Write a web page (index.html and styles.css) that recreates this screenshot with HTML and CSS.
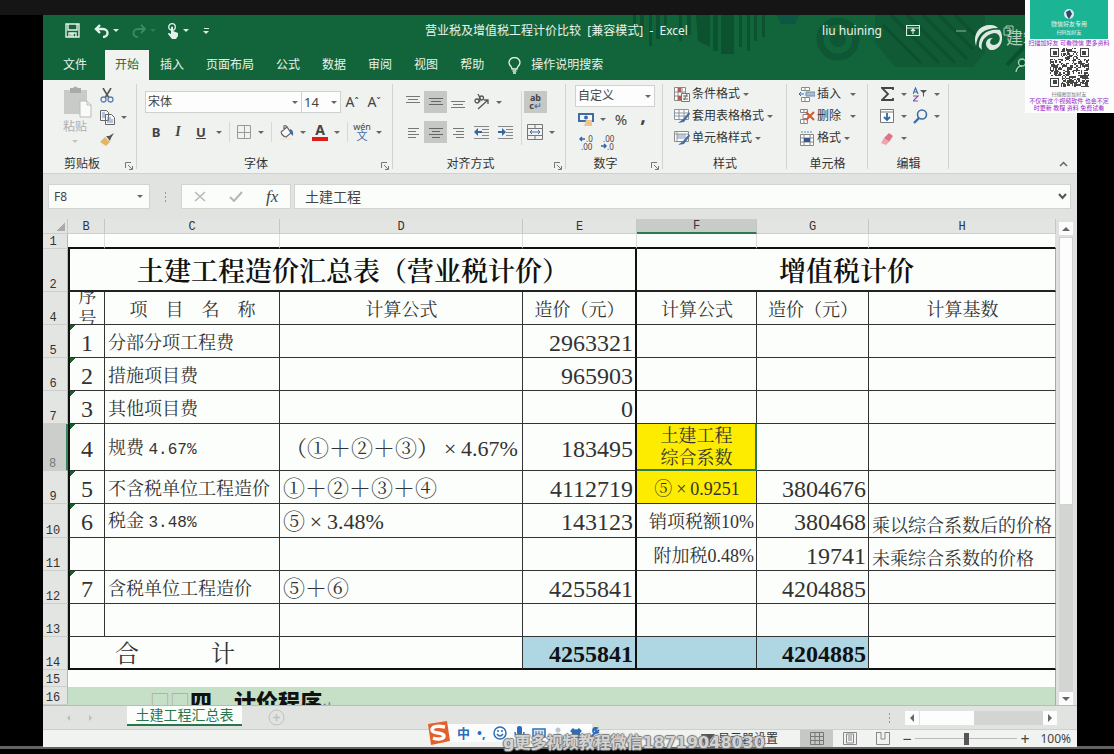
FILE: index.html
```html
<!DOCTYPE html>
<html lang="zh-CN">
<head>
<meta charset="utf-8">
<title>营业税及增值税工程计价比较 - Excel</title>
<link rel="stylesheet" href="styles.css">
</head>
<body>
<main class="window">
  <header class="top">
    <svg class="decor" viewBox="0 0 460 65" width="460" height="65" aria-hidden="true">
      <g fill="#0c5230"><path d="M16 0h3v12h-3zM23 0h4v18h-4zM32 0h3v31h-3zM39 0h4v24h-4zM47 0h3v10h-3zM62 0h3v26h-3zM70 0h4v20h-4zM79 0h14v32l-12-6zM96 0h5v36h-5zM104 0h13v39h-13zM122 0h3v32h-3zM130 0h3v36h-3zM137 0h3v26h-3zM145 0h3v22h-3z"/></g>
      <path d="M160 0h22l-4 9h-14z" fill="#0d5743"/>
      <circle cx="221" cy="24" r="18" fill="none" stroke="#0f5635" stroke-width="7"/><circle cx="221" cy="24" r="8" fill="#0f5635"/>
      <path d="M258 0h110v38l-12 14H278l-20-24z" fill="#115a36"/>
      <path d="M266 10l38 38M274 0l48 48M290 0l48 48M306 0l44 44M322 0l34 34M338 0l24 24" stroke="#0d5030" stroke-width="3"/>
      <path d="M390 50l30-32M400 54l35-37" stroke="#0d5030" stroke-width="4"/>
    </svg>
    <div class="titlebar">
      <div class="quick">
        <button class="q save" aria-label="保存"><svg width="15" height="15" viewBox="0 0 15 15"><path d="M1 1h13v13H1zM3 1v6h9V1M4 14v-4h7v4M6 14v-3h2v3" fill="none" stroke="#e4f1e8" stroke-width="1.4"/></svg></button>
        <button class="q" aria-label="撤消"><svg width="16" height="14" viewBox="0 0 16 14"><path d="M6 1L2 5l4 4M2 5h7c6 0 6 8 0 8" fill="none" stroke="#e4f1e8" stroke-width="2.4"/></svg></button><i class="caret pale"></i>
        <button class="q redo" aria-label="重做"><svg width="16" height="14" viewBox="0 0 16 14"><path d="M10 1l4 4-4 4M14 5H7c-6 0-6 8 0 8" fill="none" stroke="#3b8a60" stroke-width="1.8"/></svg></button><i class="caret faint"></i>
        <button class="q touch" aria-label="触摸/鼠标模式"><svg width="13" height="16" viewBox="0 0 13 16"><circle cx="5" cy="4" r="3.3" fill="none" stroke="#e4f1e8" stroke-width="1.3"/><path d="M4 4q1-1 2 0v4l5 2v3L9 16H5L1 11q0-2 3 0z" fill="#e4f1e8"/></svg></button><i class="caret pale"></i>
        <button class="q more" aria-label="自定义快速访问工具栏"><i class="bar"></i><i class="caret pale"></i></button>
      </div>
      <h1 class="doc">营业税及增值税工程计价比较&nbsp; [兼容模式]&nbsp; -&nbsp; Excel</h1>
      <div class="account">
        <span class="user">liu huining</span>
        <button class="q" aria-label="功能区显示选项"><svg width="14" height="11" viewBox="0 0 14 11"><path d="M.5.500h13v10H.5zM.5 3h13M7 9V4M5 6l2-2 2 2" fill="none" stroke="#dcebe2" stroke-width="1.2"/></svg></button>
        <button class="q min" aria-label="最小化"><svg width="10" height="2"><path d="M0 1h10" stroke="#8db8a0"/></svg></button>
      </div>
    </div>
    <nav class="tabs">
      <a href="#" class="tab">文件</a><a href="#" class="tab on">开始</a><a href="#" class="tab">插入</a><a href="#" class="tab">页面布局</a><a href="#" class="tab">公式</a><a href="#" class="tab">数据</a><a href="#" class="tab">审阅</a><a href="#" class="tab">视图</a><a href="#" class="tab">帮助</a>
      <a href="#" class="tab tell"><svg width="13" height="17" viewBox="0 0 13 17"><path d="M4 12C4 9 1 9 1 5.500a5.500 5 0 0 1 11 0C12 9 9 9 9 12zM4.500 14h4M5 16h3" fill="none" stroke="#e4f1e8" stroke-width="1.300"/></svg>操作说明搜索</a>
      <svg class="share" width="12" height="15" viewBox="0 0 12 15"><circle cx="7" cy="4.500" r="3.500" fill="none" stroke="#a9cdb8" stroke-width="1.300"/><path d="M1 14q1-6 6-6" fill="none" stroke="#a9cdb8" stroke-width="1.300"/></svg>
    </nav>
    <div class="brand"><svg width="28" height="28" viewBox="0 0 28 28"><path d="M17 1C6 0-2 10 2 22 3 10 10 4 24 4 22 2 20 1 17 1z" fill="#dfe9e3"/><path d="M26 6C13 4 4 12 5 23l3 3C6 17 12 10 21 9c7 1 6 11-1 12-5 0-5-5-1-7-7-1-10 8-3 12 11 1 15-12 10-20z" fill="#dfe9e3"/></svg><svg class="restore" width="11" height="11" viewBox="0 0 11 11"><path d="M1 3h6v7H1zM3 3V1h7v7H7" fill="none" stroke="#a9cdb8"/></svg><span>建筑</span></div>
  </header>

  <section class="ribbon" aria-label="功能区">
    <div class="group clip">
      <div class="body">
        <button class="paste"><svg width="30" height="32" viewBox="0 0 30 32"><path d="M1 4h23v24H1z" fill="#c9cbc9"/><path d="M7 2h3q2-3 5 0h3v5H7z" fill="#a9aba9"/><path d="M17 15h7l4 4v12H17z" fill="#fafafa" stroke="#b9bbb9"/><path d="M24 15v4h4" fill="none" stroke="#b9bbb9"/></svg>粘贴<i class="caret light"></i></button>
        <div class="stack small">
          <div class="line"><button class="b22" aria-label="剪切"><svg width="14" height="15" viewBox="0 0 14 15"><path d="M3 0l6 10M11 0L5 10" stroke="#555" stroke-width="1.600"/><circle cx="3.500" cy="11.500" r="2.500" fill="none" stroke="#5b7fb0" stroke-width="1.300"/><circle cx="10.500" cy="11.500" r="2.500" fill="none" stroke="#5b7fb0" stroke-width="1.300"/></svg></button></div>
          <div class="line"><button class="b22" aria-label="复制"><svg width="15" height="15" viewBox="0 0 15 15"><path d="M.5.500h6l2 2v8h-8zM5.500 4.500h6l3 3v7h-9z" fill="#f5f6f5" stroke="#666"/><path d="M2 3h3M2 5h3M2 7h3M7 8h4M7 10h6M7 12h6" stroke="#6f8fba"/></svg></button><i class="caret"></i></div>
          <div class="line"><button class="b22" aria-label="格式刷"><svg width="14" height="13" viewBox="0 0 14 13"><path d="M14 0L9 3 6 3 10 8 11 5z" fill="#555"/><path d="M5 4l5 5-4 4-6-4z" fill="#e3b568"/></svg></button></div>
        </div>
      </div>
      <div class="foot"><span>剪贴板</span><button class="launch" aria-label="剪贴板设置"><svg width="8" height="8"><path d="M.5 6V.5H6M3 3l4 4M7.500 4v3.500H4" fill="none" stroke="#777"/></svg></button></div>
    </div>

    <div class="group font">
      <div class="body col">
        <div class="line combo"><label class="pick family"><select aria-label="字体"><option>宋体</option></select><i class="caret"></i></label><label class="pick size"><select aria-label="字号"><option>14</option></select><i class="caret"></i></label><button class="b22 grow">A<sup>ˆ</sup></button><button class="b22 grow">A<sup>ˇ</sup></button></div>
        <div class="line fmt"><button class="b22 bold">B</button><button class="b22 ital">I</button><button class="b22 under">U</button><i class="caret"></i><i class="sep"></i><button class="b22" aria-label="边框"><svg width="14" height="14"><path d="M.5.500h13v13H.5zM7.500 0v14M0 7.500h14" fill="none" stroke="#999"/></svg></button><i class="caret"></i><i class="sep"></i><button class="b22" aria-label="填充颜色"><svg width="15" height="15" viewBox="0 0 15 15"><path d="M2 7l6-5 4 6-5 4q-4-1-5-5M5 5V1q2-1 3 1" fill="#f7f7f7" stroke="#666" stroke-width="1.200"/><path d="M11 4q4 1 3 7l-3-3z" fill="#44699d"/><path d="M1 14h12" stroke="#f6e4d8" stroke-width="2"/></svg></button><i class="caret"></i><button class="b22 color">A</button><i class="caret"></i><i class="sep"></i><button class="b22 wen"><span>wén</span><span>文</span></button><i class="caret"></i></div>
      </div>
      <div class="foot"><span>字体</span><button class="launch" aria-label="字体设置"><svg width="8" height="8"><path d="M.5 6V.5H6M3 3l4 4M7.500 4v3.500H4" fill="none" stroke="#777"/></svg></button></div>
    </div>

    <div class="group align">
      <div class="body">
        <div class="stack wide">
          <div class="line"><button class="b22" aria-label="顶端对齐"><svg width="14" height="14"><path d="M0 1.500h14M2 4.500h10M0 7.500h14" stroke="#777"/></svg></button><button class="b22 hot" aria-label="垂直居中"><svg width="14" height="14"><path d="M0 3.500h14M2 6.500h10M0 9.500h14" stroke="#666"/></svg></button><button class="b22" aria-label="底端对齐"><svg width="14" height="14"><path d="M0 6.500h14M2 9.500h10M0 12.500h14" stroke="#777"/></svg></button><button class="b22 ind" aria-label="方向"><svg width="17" height="16" viewBox="0 0 17 16"><g fill="none" stroke="#555" stroke-width="1.300"><circle cx="4" cy="7" r="2"/><path d="M5 5l2 3"/><circle cx="8.500" cy="4" r="2"/><path d="M5 0l3 6M5 15L15 6M11 6h4v4"/></g></svg></button><i class="caret"></i></div>
          <div class="line"><button class="b22" aria-label="左对齐"><svg width="11" height="11"><path d="M0 1.500h11M0 4.500h8M0 7.500h11M0 10.500h8" stroke="#777"/></svg></button><button class="b22 hot" aria-label="居中"><svg width="14" height="11"><path d="M0 1.500h14M3 4.500h8M0 7.500h14M3 10.500h8" stroke="#666"/></svg></button><button class="b22" aria-label="右对齐"><svg width="11" height="11"><path d="M0 1.500h11M3 4.500h8M0 7.500h11M3 10.500h8" stroke="#777"/></svg></button><button class="b22 ind" aria-label="减少缩进"><svg width="15" height="14"><path d="M0 1.500h15M8 4.500h7M8 7.500h7M8 10.500h7M0 13.500h15" stroke="#888"/><path d="M0 7l4-4v3h4v2H4v3z" fill="#3465a4"/></svg></button><button class="b22 ind" aria-label="增加缩进"><svg width="15" height="14"><path d="M0 1.500h15M8 4.500h7M8 7.500h7M8 10.500h7M0 13.500h15" stroke="#888"/><path d="M8 7L4 3v3H0v2h4v3z" fill="#3465a4"/></svg></button></div>
        </div>
        <i class="rule"></i>
        <div class="stack">
          <div class="line"><button class="b22 hot wrap" aria-label="自动换行"><span>ab</span><span>c<b>↵</b></span></button></div>
          <div class="line"><button class="b22" aria-label="合并后居中"><svg width="16" height="16"><path d="M.5.500h15v15H.5zM.5 4.500h15M.5 11.500h15M8 0v4M8 12v4" fill="none" stroke="#777"/><path d="M3 8h10M5 6L3 8l2 2M11 6l2 2-2 2" fill="none" stroke="#3f6ca8"/></svg></button><i class="caret"></i></div>
        </div>
      </div>
      <div class="foot"><span>对齐方式</span><button class="launch" aria-label="对齐设置"><svg width="8" height="8"><path d="M.5 6V.5H6M3 3l4 4M7.500 4v3.500H4" fill="none" stroke="#777"/></svg></button></div>
    </div>

    <div class="group number">
      <div class="body col">
        <label class="pick kind"><select aria-label="数字格式"><option>自定义</option></select><i class="caret"></i></label>
        <div class="line"><button class="b22" aria-label="会计数字格式"><svg width="16" height="15"><path d="M1 2h14v7H1z" fill="#f4f7fa" stroke="#3f6ca8" stroke-width="2"/><circle cx="8" cy="5.500" r="2" fill="#3f6ca8"/><path d="M8 8h6v6H6z" fill="#efc48a"/></svg></button><i class="caret"></i><button class="b22 pct">%</button><button class="b22 comma">,</button></div>
        <div class="line dec"><button class="b22" aria-label="增加小数位数"><svg width="14" height="15"><path d="M1 4h5M3 2L1 4l2 2" fill="none" stroke="#3465a4" stroke-width="1.500"/><text x="7" y="7" font-size="8" fill="#444">.0</text><text x="2" y="15" font-size="8" fill="#444">.00</text></svg></button><button class="b22" aria-label="减少小数位数"><svg width="14" height="15"><text x="2" y="7" font-size="8" fill="#444">.00</text><path d="M0 11h5M3 9l2 2-2 2" fill="none" stroke="#3465a4" stroke-width="1.500"/><text x="6" y="15" font-size="8" fill="#444">.0</text></svg></button></div>
      </div>
      <div class="foot"><span>数字</span><button class="launch" aria-label="数字设置"><svg width="8" height="8"><path d="M.5 6V.5H6M3 3l4 4M7.500 4v3.500H4" fill="none" stroke="#777"/></svg></button></div>
    </div>

    <div class="group style">
      <div class="body col">
        <button class="cmd"><svg width="16" height="15"><path d="M.5.500h11v13H.5zM4 0v14M8 0v14M0 5h11M0 9h11" fill="#fff" stroke="#888"/><path d="M4 1h3v4H4zM4 9h3v4H4z" fill="#b65b50"/><path d="M7.500 6.500h8v8h-8z" fill="#f4f4f4" stroke="#777"/><path d="M9 9h5M9 12h5M13 7l-3 6" stroke="#666"/></svg>条件格式<i class="caret"></i></button>
        <button class="cmd"><svg width="16" height="15"><path d="M.5.500h14v10H.5zM0 4h15M0 7h15M5 0v11M10 0v11" fill="#fff" stroke="#8a94a0"/><path d="M15 3l-6 7-5 4 6-1 6-8z" fill="#4a6f9d"/></svg>套用表格格式<i class="caret"></i></button>
        <button class="cmd"><svg width="16" height="15"><path d="M.5.500h14v10H.5z" fill="#fff" stroke="#888"/><path d="M3 3h9v5H3z" fill="#b6cbe2"/><path d="M0 3h15M3 0v11" stroke="#999"/><path d="M15 3l-6 7-5 4 6-1 6-8z" fill="#4a6f9d"/></svg>单元格样式<i class="caret"></i></button>
      </div>
      <div class="foot"><span>样式</span></div>
    </div>

    <div class="group cells">
      <div class="body col">
        <button class="cmd far"><svg width="16" height="15"><path d="M2.500.500h8v3h-8zM6 0v4M2.500 10.500h8v4h-8zM6 10v5" fill="#fff" stroke="#888"/><path d="M7 5h9v4H7z" fill="#a9bdd4" stroke="#6f8cae"/><path d="M0 7h5M2 5L0 7l2 2" fill="none" stroke="#3f6ca8"/></svg>插入<i class="caret"></i></button>
        <button class="cmd far"><svg width="16" height="15"><path d="M1.500.500h7v3h-7zM5 0v4M4 5.500h5v4H4zM1.500 10.500h7v4h-7zM5 10v5" fill="#fff" stroke="#888"/><path d="M7 3l8 8M15 3l-8 8" stroke="#cf5a32" stroke-width="2"/></svg>删除<i class="caret"></i></button>
        <button class="cmd"><svg width="16" height="15"><path d="M1.500 3.500h13v11h-13zM5 3v11M11 3v11M1 7h14M1 11h14" fill="#fff" stroke="#888"/><path d="M5 7h6v4H5z" fill="#31598f"/><path d="M2 1h12" stroke="#6085b3" stroke-dasharray="2 1"/></svg>格式<i class="caret"></i></button>
      </div>
      <div class="foot"><span>单元格</span></div>
    </div>

    <div class="group edit">
      <div class="body col">
        <div class="line"><button class="b22" aria-label="自动求和"><svg width="13" height="14"><path d="M12 3V1H1l6 6-6 6h11v-2" fill="none" stroke="#444" stroke-width="1.800"/></svg></button><i class="caret"></i><button class="b22" aria-label="排序和筛选"><svg width="15" height="15"><g fill="none" stroke-width="1.200"><path d="M0 7l2.500-6L5 7M1 5h3" stroke="#3f6ca8"/><path d="M0 9h5l-5 5h5" stroke="#8a4fa0"/></g><path d="M7 3h7l-3 3v4l-1-1V6z" fill="#555"/></svg></button><i class="caret"></i></div>
        <div class="line"><button class="b22" aria-label="填充"><svg width="14" height="14"><path d="M.5.500h13v13H.5zM.5 3h13" fill="#fff" stroke="#777"/><path d="M7 4v7M4 8l3 3 3-3" fill="none" stroke="#2e67ab" stroke-width="1.800"/></svg></button><i class="caret"></i><button class="b22" aria-label="查找和选择"><svg width="15" height="15"><circle cx="9" cy="5.500" r="4.500" fill="none" stroke="#3c6ca6" stroke-width="1.600"/><path d="M6 9l-5 5" stroke="#3c6ca6" stroke-width="2.400"/></svg></button><i class="caret"></i></div>
        <div class="line"><button class="b22" aria-label="清除"><svg width="14" height="13"><path d="M9 1l4 3-4 6-5-4z" fill="#df7484"/><path d="M4 6l5 4-3 3-5-2z" fill="#efa4ae"/></svg></button><i class="caret"></i></div>
      </div>
      <div class="foot"><span>编辑</span></div>
    </div>
    <button class="fold" aria-label="折叠功能区"><svg width="9" height="6"><path d="M1 5l3.500-3.500L8 5" fill="none" stroke="#666" stroke-width="1.500"/></svg></button>
  </section>

  <section class="formula">
    <label class="name"><input value="F8" aria-label="名称框"><i class="caret"></i></label>
    <span class="dots"></span>
    <div class="fx"><button aria-label="取消"><svg width="12" height="11"><path d="M1 1l10 9M11 1L1 10" stroke="#b5b7b5" stroke-width="1.500"/></svg></button><button aria-label="输入"><svg width="14" height="11"><path d="M1 6l4 4 8-9" fill="none" stroke="#b5b7b5" stroke-width="2"/></svg></button><button class="fn">fx</button></div>
    <label class="entry"><input value="土建工程" aria-label="编辑栏"><svg width="9" height="7"><path d="M1 1l3.500 4L8 1" fill="none" stroke="#555" stroke-width="2"/></svg></label>
  </section>

  <section class="sheet">
    <table class="grid">
      <colgroup><col class="cr"><col class="cb"><col class="cc"><col class="cd"><col class="ce"><col class="cf"><col class="cg"><col></colgroup>
      <thead><tr class="letters"><th class="corner"><i></i></th><th>B</th><th>C</th><th>D</th><th>E</th><th class="sel">F</th><th>G</th><th>H</th></tr></thead>
      <tbody>
        <tr class="h1 blank"><th>1</th><td></td><td></td><td></td><td></td><td></td><td></td><td></td></tr>
        <tr class="h2 titles"><th>2</th><td colspan="4" class="first thick">土建工程造价汇总表（营业税计价）</td><td colspan="3">增值税计价</td></tr>
        <tr class="h4 mid"><th>4</th><td class="first"><div class="serial">序号</div></td><td>项　目　名　称</td><td>计算公式</td><td class="thick">造价（元）</td><td>计算公式</td><td>造价（元）</td><td>计算基数</td></tr>
        <tr class="h5"><th>5</th><td class="first no">1</td><td>分部分项工程费</td><td></td><td class="num thick">2963321</td><td></td><td></td><td></td></tr>
        <tr class="h5"><th>6</th><td class="first no">2</td><td>措施项目费</td><td></td><td class="num thick">965903</td><td></td><td></td><td></td></tr>
        <tr class="h5"><th>7</th><td class="first no">3</td><td>其他项目费</td><td></td><td class="num thick">0</td><td></td><td></td><td></td></tr>
        <tr class="h8"><th class="sel">8</th><td class="first no">4</td><td>规费 <span class="mono">4.67%</span></td><td class="calc center">（①＋②＋③）<span class="x">×</span>4.67%</td><td class="num thick">183495</td><td class="yellow active">土建工程<br>综合系数</td><td></td><td></td></tr>
        <tr class="h5"><th>9</th><td class="first no">5</td><td>不含税单位工程造价</td><td class="calc">①＋②＋③＋④</td><td class="num thick">4112719</td><td class="yellow">⑤<span class="x">×</span>0.9251</td><td class="num">3804676</td><td></td></tr>
        <tr class="h10"><th>10</th><td class="first no">6</td><td>税金 <span class="mono">3.48%</span></td><td class="calc">⑤<span class="x">×</span>3.48%</td><td class="num thick">143123</td><td class="right">销项税额10%</td><td class="num">380468</td><td class="low">乘以综合系数后的价格</td></tr>
        <tr class="h5"><th>11</th><td class="first"></td><td></td><td></td><td class="thick"></td><td class="right">附加税0.48%</td><td class="num">19741</td><td class="low">未乘综合系数的价格</td></tr>
        <tr class="h5"><th>12</th><td class="first no">7</td><td>含税单位工程造价</td><td class="calc">⑤＋⑥</td><td class="num thick">4255841</td><td></td><td class="num">4204885</td><td></td></tr>
        <tr class="h5"><th>13</th><td class="first"></td><td></td><td></td><td class="thick"></td><td></td><td></td><td></td></tr>
        <tr class="h5 total"><th>14</th><td colspan="2" class="first sum">合　　　计</td><td></td><td class="num blue thick">4255841</td><td class="blue"></td><td class="num blue">4204885</td><td></td></tr>
        <tr class="h15 plain"><th>15</th><td colspan="7"></td></tr>
        <tr class="h16 plain"><th>16</th><td colspan="7" class="green"><div class="steps"><span>□□</span>四、计价程序<small>↵</small></div></td></tr>
      </tbody>
    </table>
    <div class="vscroll"><button aria-label="向上"><i class="tri up"></i></button><i class="vthumb"></i><i class="space"></i><button aria-label="向下"><i class="tri down"></i></button></div>
  </section>

  <footer class="sheets">
    <div class="nav"><button aria-label="上一个"><i class="tri left dim"></i></button><button aria-label="下一个"><i class="tri right dim"></i></button></div>
    <a href="#" class="sheettab">土建工程汇总表</a>
    <button class="add" aria-label="新工作表"><svg width="17" height="17"><circle cx="8.500" cy="8.500" r="7.500" fill="none" stroke="#bfc1bf"/><path d="M8.500 5v7M5 8.500h7" stroke="#bfc1bf" stroke-width="1.500"/></svg></button>
    <span class="dots push"></span>
    <div class="hscroll"><button aria-label="向左"><i class="tri left"></i></button><i class="hthumb"></i><i class="space"></i><button aria-label="向右"><i class="tri right"></i></button></div>
  </footer>
  <footer class="status">
    <span class="display"><svg width="15" height="12"><path d="M0 1h14L9 7v5H3z" fill="#555"/></svg>显示器设置</span>
    <button class="view on" aria-label="普通"><svg width="14" height="13"><path d="M.5.500h13v12H.5zM5 0v13M9.500 0v13M0 4.500h14M0 8.500h14" fill="none" stroke="#777"/></svg></button>
    <button class="view" aria-label="页面布局"><svg width="14" height="13"><path d="M.5.500h13v12H.5zM3.500 2v9h7V2z" fill="none" stroke="#888"/><path d="M5 4h4M5 6h4M5 8h4" stroke="#888"/></svg></button>
    <button class="view" aria-label="分页预览"><svg width="14" height="13"><path d="M.5 0v12.500h13V0M5 0v7h4V0M0 .5h5M9 .5h5" fill="none" stroke="#888"/></svg></button>
    <button class="pm">−</button><input class="zoom" type="range" min="0" max="100" value="51" aria-label="缩放"><button class="pm">+</button><span class="percent">100%</span>
  </footer>
</main>

<div class="ime">
  <svg class="sogou" width="23" height="24" viewBox="0 0 23 24"><path d="M1 3l19-3 3 20-19 4z" fill="#e4602b"/><path d="M18 6C9 4 5 6 5 9c0 4 12 2 12 6 0 3-6 4-11 2" fill="none" stroke="#fff" stroke-width="3.500"/></svg>
  <span>中</span><span>•,</span>
  <svg width="14" height="14" viewBox="0 0 14 14"><g fill="none" stroke="#2d6db8" stroke-width="1.500"><circle cx="7" cy="7" r="6"/><path d="M4 8q3 4 6 0M5 4v2M9 4v2"/></g></svg>
  <svg width="11" height="15" viewBox="0 0 11 15"><rect x="3" width="5" height="9" rx="2" fill="#2d6db8"/><path d="M1 6c0 7 9 7 9 0M5.500 11v3M3 14h5" fill="none" stroke="#2d6db8" stroke-width="1.500"/></svg>
  <svg width="14" height="10"><path d="M1 1h12v8H1z" fill="#dce8f5" stroke="#2d6db8" stroke-width="1.500"/><path d="M3 4h8M3 6h8" stroke="#2d6db8" stroke-dasharray="2 1"/></svg>
  <svg width="10" height="13"><circle cx="5" cy="3" r="2.500" fill="#bfc6c8"/><path d="M0 12q5-12 10 0z" fill="#bfc6c8"/></svg>
  <svg width="12" height="11"><path d="M3 0q3 3 6 0l3 3-2 2v6H2V5L0 3z" fill="#2d6db8"/></svg>
  <svg width="11" height="12"><path d="M1 11l6-6M10 3L8 5 6 3l2-2Q4 0 4 4t6 1" fill="none" stroke="#2d6db8" stroke-width="1.800"/></svg>
</div>
<div class="watermark">g更多视频教程微信18719048030</div>
<aside class="card">
  <div class="teal"><svg width="12" height="12"><circle cx="6" cy="6" r="5" fill="#dbe9f1"/><path d="M3 4l4-2 2 4-3 5-2-3z" fill="#2d4c63"/></svg><span>微信好友专用</span><small>扫码加好友</small></div>
  <p>扫描加好友 可看微信 更多资料</p>
  <svg id="qr" width="39" height="39" viewBox="0 0 29 29" shape-rendering="crispEdges" aria-label="二维码"></svg>
  <small class="hint">扫描图案加好友</small>
  <p>不仅有这个视频软件 也会不定<br>时更新 教程 资料 免费试看</p>
</aside>
<script src="qr.js"></script>
</body>
</html>
```
FILE: styles.css
```css
* { box-sizing: border-box; }
body { margin: 0; min-height: 100vh; padding: 15px 37px 7px 43px; background: linear-gradient(#151515 15px, #000 15px, #000 calc(100% - 8px), #626262 calc(100% - 8px), #626262 calc(100% - 5px), #000 calc(100% - 5px)); font: 12px/16px "Noto Sans", "Noto Sans CJK SC", sans-serif; color: #444; position: relative; }
button { border: 0; padding: 0; background: none; font: inherit; color: inherit; display: flex; align-items: center; justify-content: center; }
a { color: inherit; text-decoration: none; }
svg { display: block; flex: none; }
select, input { font: inherit; color: inherit; border: 0; background: none; padding: 0; margin: 0; appearance: none; outline: 0; min-width: 0; flex: 1; }
.window { background: #e1e3e1; }
.caret { flex: none; width: 12px; display: flex; justify-content: center; }
.caret::after { content: ""; border: 3px solid transparent; border-top-color: #666; border-bottom: 0; }
.caret.pale::after { border-top-color: #dcebe2; }
.caret.faint::after { border-top-color: #2c7b52; }
.caret.light::after { border-top-color: #c3c5c3; }

.top { background: #12653b; color: #e8f3ec; position: relative; }
.decor { position: absolute; right: 0; top: 0; width: 460px; }
.titlebar { position: relative; display: flex; height: 35px; padding: 0 111px 4px 21px; align-items: center; }
.quick { display: flex; align-items: center; width: 361px; flex: none; }
.q.save { width: 16px; margin-right: 14px; }
.redo { margin-left: 9px; }
.touch { margin-left: 8px; }
.more { flex-direction: column; gap: 2px; margin-left: 8px; }
.bar { width: 5px; height: 1px; background: #dcebe2; }
.doc { margin: 0 auto 0 0; font-size: 12px; font-weight: 400; white-space: nowrap; }
.account { display: flex; align-items: center; gap: 24px; }
.user { font-size: 12px; white-space: nowrap; }
.account .min { margin-left: 12px; }
.tabs { position: relative; display: flex; height: 30px; align-items: stretch; padding-left: 9px; }
.tab { padding: 0 11px; line-height: 30px; white-space: nowrap; }
.tab:first-child { padding-right: 20px; }
.tab { display: flex; align-items: center; }
.tab.on { background: #f1f3f1; color: #1a6b43; padding: 0 10px; margin-left: -2px; margin-right: 0; }
.tell { gap: 10px; padding-left: 13px; }
.share { margin: 8px 50px 0 auto; }
.brand { position: absolute; right: 37px; top: 9px; display: flex; align-items: center; color: #b5ccbf; font-size: 17px; white-space: nowrap; }
.restore { margin: -16px -8px 0 1px; }

.ribbon { display: flex; height: 94px; background: #f0f2f0; border-bottom: 1px solid #d0d2d0; position: relative; }
.group { display: flex; flex-direction: column; position: relative; padding-top: 3px; }
.group::after { content: ""; position: absolute; right: 0; top: 4px; bottom: 4px; width: 1px; background: #d0d2d0; }
.body { display: flex; height: 72px; }
.col, .stack { display: flex; flex-direction: column; }
.line { display: flex; align-items: center; height: 22px; }
.foot { display: flex; height: 18px; align-items: center; justify-content: center; position: relative; color: #333; }
.launch { position: absolute; right: 4px; bottom: 3px; }
.b22 { width: 22px; height: 22px; flex: none; }
.hot { background: #c6c8c6; width: 23px; }
.sep { width: 8px; height: 20px; background: linear-gradient(#d6d8d6, #d6d8d6) 4px 0 / 1px 100% no-repeat; }
.pick { display: flex; align-items: center; background: #fcfdfc; border: 1px solid #cfd1cf; height: 22px; padding-left: 2px; }
.clip { width: 94px; }
.clip .foot { padding-right: 16px; }
.paste { flex-direction: column; width: 42px; margin-left: 11px; color: #adafad; justify-content: flex-start; padding-top: 3px; }
.paste svg { margin-bottom: 1px; margin-left: 6px; }
.paste .caret { margin-top: 5px; }
.small { padding-top: 1px; }
.font { width: 256px; }
.font .body { padding: 8px 0 0 8px; gap: 8px; }
.font .foot { padding-right: 18px; }
.family { width: 157px; }
.size { width: 39px; border-left: 0; }
.size, .name { font-size: 13px; }
.grow { font-size: 14px; }
.grow sup { font-size: 10px; line-height: 10px; }
.bold { font-weight: 700; }
.ital { font: italic 700 14px/16px "Liberation Serif", serif; }
.under { text-decoration: underline; font-weight: 700; width: 24px; }
.fmt .bold, .fmt .under { font-size: 13px; }
.color { font-weight: 700; font-size: 14px; line-height: 14px; }
.color { height: 18px; width: 16px; margin: 0 3px; border-bottom: 4px solid #e01b1b; }
.wen { flex-direction: column; font-size: 9px; line-height: 8px; }
.wen span + span { color: #3f6ca8; font-size: 11px; line-height: 10px; }
.align { width: 173px; }
.align .body { padding: 8px 0 0 9px; }
.align .stack { gap: 8px; }
.align .foot { padding-right: 18px; }
.wide { width: 119px; }
.ind { width: 24px; }
.wrap { flex-direction: column; font-size: 9px; font-weight: 700; line-height: 8px; }
.wrap b { color: #4d74b4; }
.rule { width: 1px; height: 54px; background: #d6d8d6; margin-right: 2px; }
.number { width: 97px; }
.number .body { padding: 2px 8px 0 9px; gap: 1px; }
.number .foot { padding-right: 18px; }
.pct { font-size: 15px; margin-left: 1px; }
.comma { font: 700 20px/14px "Noto Sans", sans-serif; align-items: flex-start; }
.style { width: 124px; }
.style .body { padding-left: 11px; }
.cmd { height: 22px; justify-content: flex-start; gap: 2px; white-space: nowrap; color: #333; }
.cmd .caret { margin-left: -2px; }
.cmd.far .caret { margin-left: 4px; }
.cells { width: 81px; }
.cells .body { padding-left: 12px; }
.edit { width: 81px; }
.edit .body { padding-left: 8px; }
.edit .caret { width: 11px; }
.fold { margin: 0 9px 6px auto; align-self: flex-end; }

.formula { display: flex; padding: 10px 6px 10px 5px; height: 45px; align-items: center; }
.name, .fx, .entry { background: #fbfdfb; border: 1px solid #d2d4d2; height: 25px; display: flex; align-items: center; }
.name { width: 102px; padding: 0 3px 0 5px; font-size: 12px; }
.dots { width: 3px; height: 11px; background: radial-gradient(circle, #999 1px, transparent 1px) 0 0 / 3px 4px; margin: 0 14px; }
.fx { width: 110px; justify-content: space-around; margin-right: 3px; }
.fn { font: italic 400 17px/20px "Liberation Serif", serif; }
.entry { flex: 1; padding: 0 3px 0 10px; font-size: 14px; }

.sheet { display: flex; }
.grid { flex: 1; width: 0; border-spacing: 0; table-layout: fixed; background: #fcfefb; font: 18px/22px "Liberation Serif", "Noto Serif CJK SC", "Noto Sans CJK SC", serif; color: #333; }
.cr { width: 25px; } .cb { width: 37px; } .cc { width: 175px; } .cd { width: 243px; }
.ce { width: 114px; } .cf { width: 120px; } .cg { width: 112px; }
.grid th, .grid td { padding: 0 2px 0 3px; overflow: hidden; white-space: nowrap; }
.grid td { padding-top: 3px; border-right: 1px solid #333; border-bottom: 1px solid #333; font-weight: 400; text-align: left; }
.grid td:last-child { border-right-color: #aaa; }
.grid th { font: 12px/12px "Liberation Mono", monospace; background: #e3e5e3; color: #333; vertical-align: bottom; border-bottom: 1px solid #cdcfcd; padding: 0; }
.grid tbody th { border-right: 1px solid #b5b7b5; padding: 0 4px 0 0; }
.grid .letters th { height: 15px; border-right: 1px solid #c6c8c6; }
.grid .letters .sel { background: #c9cbc9; border-bottom: 2px solid #2a7b52; }
.corner i { display: block; width: 9px; height: 9px; margin: 0 0 2px 13px; background: linear-gradient(135deg, transparent 50%, #aaa 50%); }
.grid tbody .sel { background: #cccecc; border-right: 2px solid #39805c; color: #777; }
.h1 { height: 15px; } .h2 { height: 43px; } .h4 { height: 33px; } .h5 { height: 33px; }
.h8 { height: 47px; } .h10 { height: 34px; } .h15 { height: 17px; } .h16 { height: 18px; }
.grid .blank td { border-right-color: #dcdedc; border-bottom: 2px solid #111; }
.grid .titles td { padding-top: 5px; font-size: 27px; line-height: 34px; font-weight: 600; text-align: center; border-bottom: 2px solid #222; color: #111; }
.grid .mid td { text-align: center; }
.grid .mid .first { padding-top: 0; }
.grid .first { border-left: 2px solid #111; }
.grid .thick { border-right: 2px solid #111; }
.grid .no { font-size: 24px; line-height: 28px; text-align: center; background: linear-gradient(135deg, #17602b 4px, transparent 4px); padding: 3px 0 0; }
.grid .num { font-size: 24px; line-height: 28px; text-align: right; }
.serial { height: 32px; width: 20px; margin: 0 auto; white-space: normal; display: flex; align-items: center; line-height: 22px; overflow: hidden; }
.grid .calc { font-size: 22px; line-height: 26px; }
.grid .center { text-align: center; }
.x { display: inline-block; width: 1em; text-align: center; }
.mono { font-family: "Liberation Mono", monospace; font-size: 16px; }
.grid .yellow { background: #fdec00; text-align: center; }
.grid .active { padding-top: 1px; border-right: 2px solid #2a7b52; border-bottom: 2px solid #2a7b52; }
.grid .right { text-align: right; }
.grid .low { vertical-align: bottom; }
.grid .blue { background: #afd6e3; }
.grid .total td { border-bottom: 2px solid #111; padding-top: 2px; }
.grid .total .num { font-weight: 700; color: #111; }
.grid .sum { font-size: 24px; line-height: 28px; text-align: center; }
.grid .plain td { border: 0; border-right: 1px solid #aaa; }
.grid .green { background: #c6e0c8; padding: 0; }
.steps { height: 17px; overflow: hidden; padding: 1px 0 0 82px; font: 900 22px/22px "Noto Sans CJK SC", sans-serif; color: #111; }
.steps span { font-weight: 300; font-size: 20px; color: #b0a79b; }
.steps small { font-size: 12px; color: #888; }
.vscroll { width: 21px; display: flex; flex-direction: column; padding: 3px 4px 0 3px; background: #dfe1df; }
.vscroll button { height: 13px; background: #fcfcfc; }
.vthumb { height: 268px; background: #fcfdfc; border: 1px solid #d0d2d0; margin-top: 2px; }
.space { flex: 1; background: #d3d5d3; }
.tri { border: 4px solid transparent; }
.up { border-bottom-color: #666; border-top: 0; }
.down { border-top-color: #666; border-bottom: 0; }
.left { border-right-color: #666; border-left: 0; }
.right.tri { border-left-color: #666; border-right: 0; }
.tri.dim { border-width: 3px; opacity: .3; }
.tri.left.dim { border-left: 0; } .tri.right.dim { border-right: 0; }

.sheets { display: flex; height: 24px; border-top: 1px solid #b9bbb9; padding-right: 20px; align-items: center; }
.nav { display: flex; width: 84px; gap: 19px; padding-left: 24px; }
.sheettab { align-self: flex-start; width: 115px; height: 20px; line-height: 18px; background: #fcfefc; border-bottom: 2px solid #27774e; color: #27774e; font-size: 14px; text-align: center; white-space: nowrap; }
.add { margin-left: 26px; }
.push { margin-left: auto; }
.hscroll { width: 152px; height: 14px; display: flex; }
.hscroll button { width: 14px; background: #fcfcfc; }
.hthumb { width: 54px; background: #fcfdfc; margin-left: 1px; }
.status { display: flex; height: 18px; background: #f1f3f1; border-top: 1px solid #cdcfcd; align-items: center; padding-right: 6px; }
.display { display: flex; align-items: center; margin-left: auto; margin-right: 22px; gap: 2px; color: #333; }
.view { width: 33px; height: 17px; }
.view.on { background: #c6c8c6; }
.pm { width: 16px; font-size: 16px; line-height: 14px; }
.zoom { flex: none; width: 102px; height: 14px; background: linear-gradient(#bbb, #bbb) 0 6px / 100% 1px no-repeat; }
.zoom::-webkit-slider-thumb { appearance: none; width: 5px; height: 12px; background: #555; }
.percent { font-size: 12px; width: 38px; text-align: right; }

.ime { position: absolute; left: 427px; bottom: 9px; width: 165px; height: 24px; display: flex; align-items: center; gap: 7px; background: linear-gradient(#fafcfe, #fafcfe) 10px 3px / 100% 18px no-repeat; color: #2d6db8; font-weight: 700; font-size: 13px; }
.watermark { position: absolute; left: 503px; bottom: 2px; font: 700 16px/18px "DejaVu Sans", "Noto Sans CJK SC", sans-serif; color: rgba(238, 238, 238, .8); text-shadow: 1px 0 1px #777, -1px 0 1px #777, 0 1px 1px #777, 0 -1px 1px #777; white-space: nowrap; }
.card { position: absolute; right: 0; top: 0; width: 89px; height: 113px; padding: 0 6px 0 5px; background: #fdfdfd; display: flex; flex-direction: column; align-items: center; color: #9227c7; font-size: 6px; line-height: 7px; white-space: nowrap; }
.teal { align-self: stretch; height: 40px; background: #1bb596; color: #e6f7f2; display: flex; flex-direction: column; align-items: center; padding-top: 8px; gap: 1px; }
.card p { margin: 1px 0; text-align: center; }
.card small { font-size: 5px; line-height: 6px; }
.card .hint { color: #777; margin-top: 4px; }
```
FILE: qr.js
```js
const size = 29;
const corners = [[0, 0], [22, 0], [0, 22]];
let seed = 41;
let path = "";
for (let y = 0; y < size; y++) {
  for (let x = 0; x < size; x++) {
    seed = (seed * 1103515245 + 12345) % 2147483648;
    let dark = (seed >> 16) % 2 === 0;
    for (const [cx, cy] of corners) {
      const d = Math.max(Math.abs(x - cx - 3), Math.abs(y - cy - 3));
      if (d <= 4) dark = d === 3 || d <= 1;
    }
    if (dark) path += `M${x} ${y}h1v1h-1z`;
  }
}
const shape = document.createElementNS("http://www.w3.org/2000/svg", "path");
shape.setAttribute("d", path);
shape.setAttribute("fill", "#444");
document.getElementById("qr").appendChild(shape);
```
